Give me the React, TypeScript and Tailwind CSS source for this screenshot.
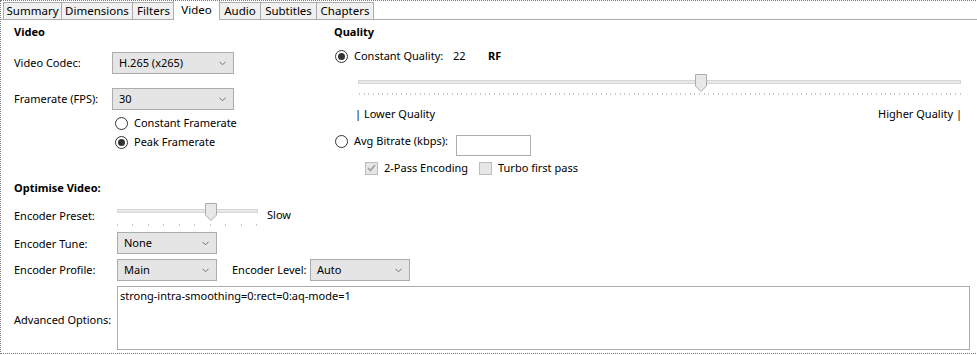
import React from "react";

const Chevron = () => (
  <svg width="7" height="5" viewBox="0 0 7 5">
    <path d="M0.5 0.8 L3.5 3.8 L6.5 0.8" stroke="#707070" fill="none" strokeWidth="1" />
  </svg>
);

const Select = ({ value, w }: { value: string; w: string }) => (
  <div className={`flex items-center justify-between h-[22px] ${w} border border-[#acacac] bg-[#e5e5e5] pl-[6px] pr-[7px]`}>
    <span className="leading-[16px] -mt-[1px]">{value}</span>
    <Chevron />
  </div>
);

const Radio = ({ checked }: { checked?: boolean }) => (
  <span className="inline-flex w-[13px] h-[13px] rounded-full border border-[#333] bg-white items-center justify-center shrink-0">
    {checked && <span className="w-[7px] h-[7px] rounded-full bg-[#333]" />}
  </span>
);

const Check = ({ checked }: { checked?: boolean }) => (
  <span className="inline-flex w-[13px] h-[13px] border border-[#bcbcbc] bg-[#e6e6e6] items-center justify-center shrink-0">
    {checked && (
      <svg width="9" height="8" viewBox="0 0 9 8">
        <path d="M1 4 L3.5 6.5 L8 1" stroke="#a0a0a0" strokeWidth="1.6" fill="none" />
      </svg>
    )}
  </span>
);

const Thumb = () => (
  <svg width="12" height="18" viewBox="0 0 12 18">
    <path d="M0.5 0.5 H11.5 V12 L6 17.5 L0.5 12 Z" fill="#e8e8e8" stroke="#adadad" strokeWidth="1" />
  </svg>
);

const Ticks = ({ n, w }: { n: number; w: string }) => (
  <div className={`flex justify-between ${w}`}>
    {Array.from({ length: n }).map((_, i) => (
      <span key={i} className="w-[1px] h-[2px] bg-[#c8c8c8]" />
    ))}
  </div>
);

const tabs = ["Summary", "Dimensions", "Filters", "Video", "Audio", "Subtitles", "Chapters"];
const tabW: Record<string, string> = {
  Summary: "w-[58px]",
  Dimensions: "w-[71px]",
  Filters: "w-[42px]",
  Video: "w-[47px]",
  Audio: "w-[41px]",
  Subtitles: "w-[56px]",
  Chapters: "w-[58px]",
};

export default function App() {
  return (
    <div
      className="w-[978px] h-[354px] bg-white border-t border-l border-b border-dotted border-[#7a7a7a] text-[11px] text-black overflow-hidden whitespace-nowrap"
      style={{ fontFamily: '"Noto Sans", "Open Sans", sans-serif' }}
    >
      {/* Tab strip */}
      <div className="flex items-end h-[19px] border-b border-[#acacac] pl-[2px]">
        {tabs.map((t) => {
          const sel = t === "Video";
          return sel ? (
            <div
              key={t}
              className={`${tabW[t]} h-[20px] -mb-[1px] -mx-[1px] relative z-10 bg-white border-t border-l border-r border-[#acacac] flex items-center justify-center leading-[16px] text-[11.5px]`}
            >
              <span className="-mt-[2px]">{t}</span>
            </div>
          ) : (
            <div
              key={t}
              className={`${tabW[t]} h-[17px] bg-[#f0f0f0] border-t border-l border-[#acacac] last:border-r flex items-center justify-center leading-[16px] text-[11.5px]`}
            >
              <span className="-mt-[1px]">{t}</span>
            </div>
          );
        })}
      </div>

      {/* Content */}
      <div className="pl-[13px] pt-[4px]">
        <div className="flex">
          {/* Left column */}
          <div className="w-[320px]">
            <div className="h-[16px] leading-[16px] font-bold">Video</div>
            <div className="mt-[12px] flex items-center">
              <span className="w-[98px]">Video Codec:</span>
              <Select value="H.265 (x265)" w="w-[122px]" />
            </div>
            <div className="mt-[14px] flex items-center">
              <span className="w-[98px]">Framerate (FPS):</span>
              <Select value="30" w="w-[122px]" />
            </div>
            <div className="mt-[5px] pl-[101px] flex items-center h-[16px] gap-[6px]">
              <Radio />
              <span className="leading-[16px]">Constant Framerate</span>
            </div>
            <div className="mt-[3px] pl-[101px] flex items-center h-[16px] gap-[6px]">
              <Radio checked />
              <span className="leading-[16px]">Peak Framerate</span>
            </div>
          </div>

          {/* Right column */}
          <div className="flex-1">
            <div className="h-[16px] leading-[16px] font-bold">Quality</div>
            <div className="mt-[8px] h-[16px] flex items-center pl-[1px]">
              <Radio checked />
              <span className="ml-[6px] w-[99px] leading-[16px]">Constant Quality:</span>
              <span className="w-[35px] leading-[16px]">22</span>
              <span className="font-bold leading-[16px]">RF</span>
            </div>
            <div className="ml-[24px] mt-[10px] relative h-[18px] w-[603px] pt-[6px]">
              <div className="h-[4px] w-full bg-[#e7eaea] border border-[#d6d6d6]" />
              <div className="absolute left-[337px] top-0">
                <Thumb />
              </div>
            </div>
            <div className="ml-[25px] mt-[1px]">
              <Ticks n={130} w="w-[602px]" />
            </div>
            <div className="ml-[21px] mt-[11px] w-[607px] flex justify-between h-[16px] leading-[16px]">
              <span>| Lower Quality</span>
              <span>Higher Quality |</span>
            </div>
            <div className="mt-[11px] flex items-start pl-[1px]">
              <span className="h-[16px] flex items-center">
                <Radio />
              </span>
              <span className="ml-[6px] w-[102px] leading-[16px]">Avg Bitrate (kbps):</span>
              <div className="mt-[2px] w-[75px] h-[21px] border border-[#acacac] bg-white" />
            </div>
            <div className="mt-[4px] h-[16px] flex items-center pl-[31px]">
              <Check checked />
              <span className="ml-[6px] w-[95px] leading-[16px]">2-Pass Encoding</span>
              <Check />
              <span className="ml-[6px] leading-[16px]">Turbo first pass</span>
            </div>
          </div>
        </div>

        {/* Optimise */}
        <div className="mt-[4px] h-[16px] leading-[16px] font-bold">Optimise Video:</div>
        <div className="mt-[7px] flex items-start">
          <span className="w-[103px] mt-[5px] leading-[16px]">Encoder Preset:</span>
          <div>
            <div className="relative h-[18px] w-[141px] pt-[6px]">
              <div className="h-[4px] w-full bg-[#e7eaea] border border-[#d6d6d6]" />
              <div className="absolute left-[88px] top-0">
                <Thumb />
              </div>
            </div>
            <div className="mt-[3px]">
              <Ticks n={10} w="w-[140px]" />
            </div>
          </div>
          <span className="ml-[9px] mt-[4px] leading-[16px]">Slow</span>
        </div>
        <div className="mt-[6px] flex items-center">
          <span className="w-[103px] mt-[2px]">Encoder Tune:</span>
          <Select value="None" w="w-[100px]" />
        </div>
        <div className="mt-[5px] flex items-center">
          <span className="w-[103px] mt-[1px]">Encoder Profile:</span>
          <Select value="Main" w="w-[100px]" />
          <span className="ml-[15px] w-[78px]">Encoder Level:</span>
          <Select value="Auto" w="w-[100px]" />
        </div>
        <div className="mt-[5px] flex items-center">
          <span className="w-[103px] mt-[5px]">Advanced Options:</span>
          <div className="w-[853px] h-[64px] border border-[#acacac] bg-white pl-[2px] pt-[1px] leading-[16px]">
            strong-intra-smoothing=0:rect=0:aq-mode=1
          </div>
        </div>
      </div>
    </div>
  );
}
